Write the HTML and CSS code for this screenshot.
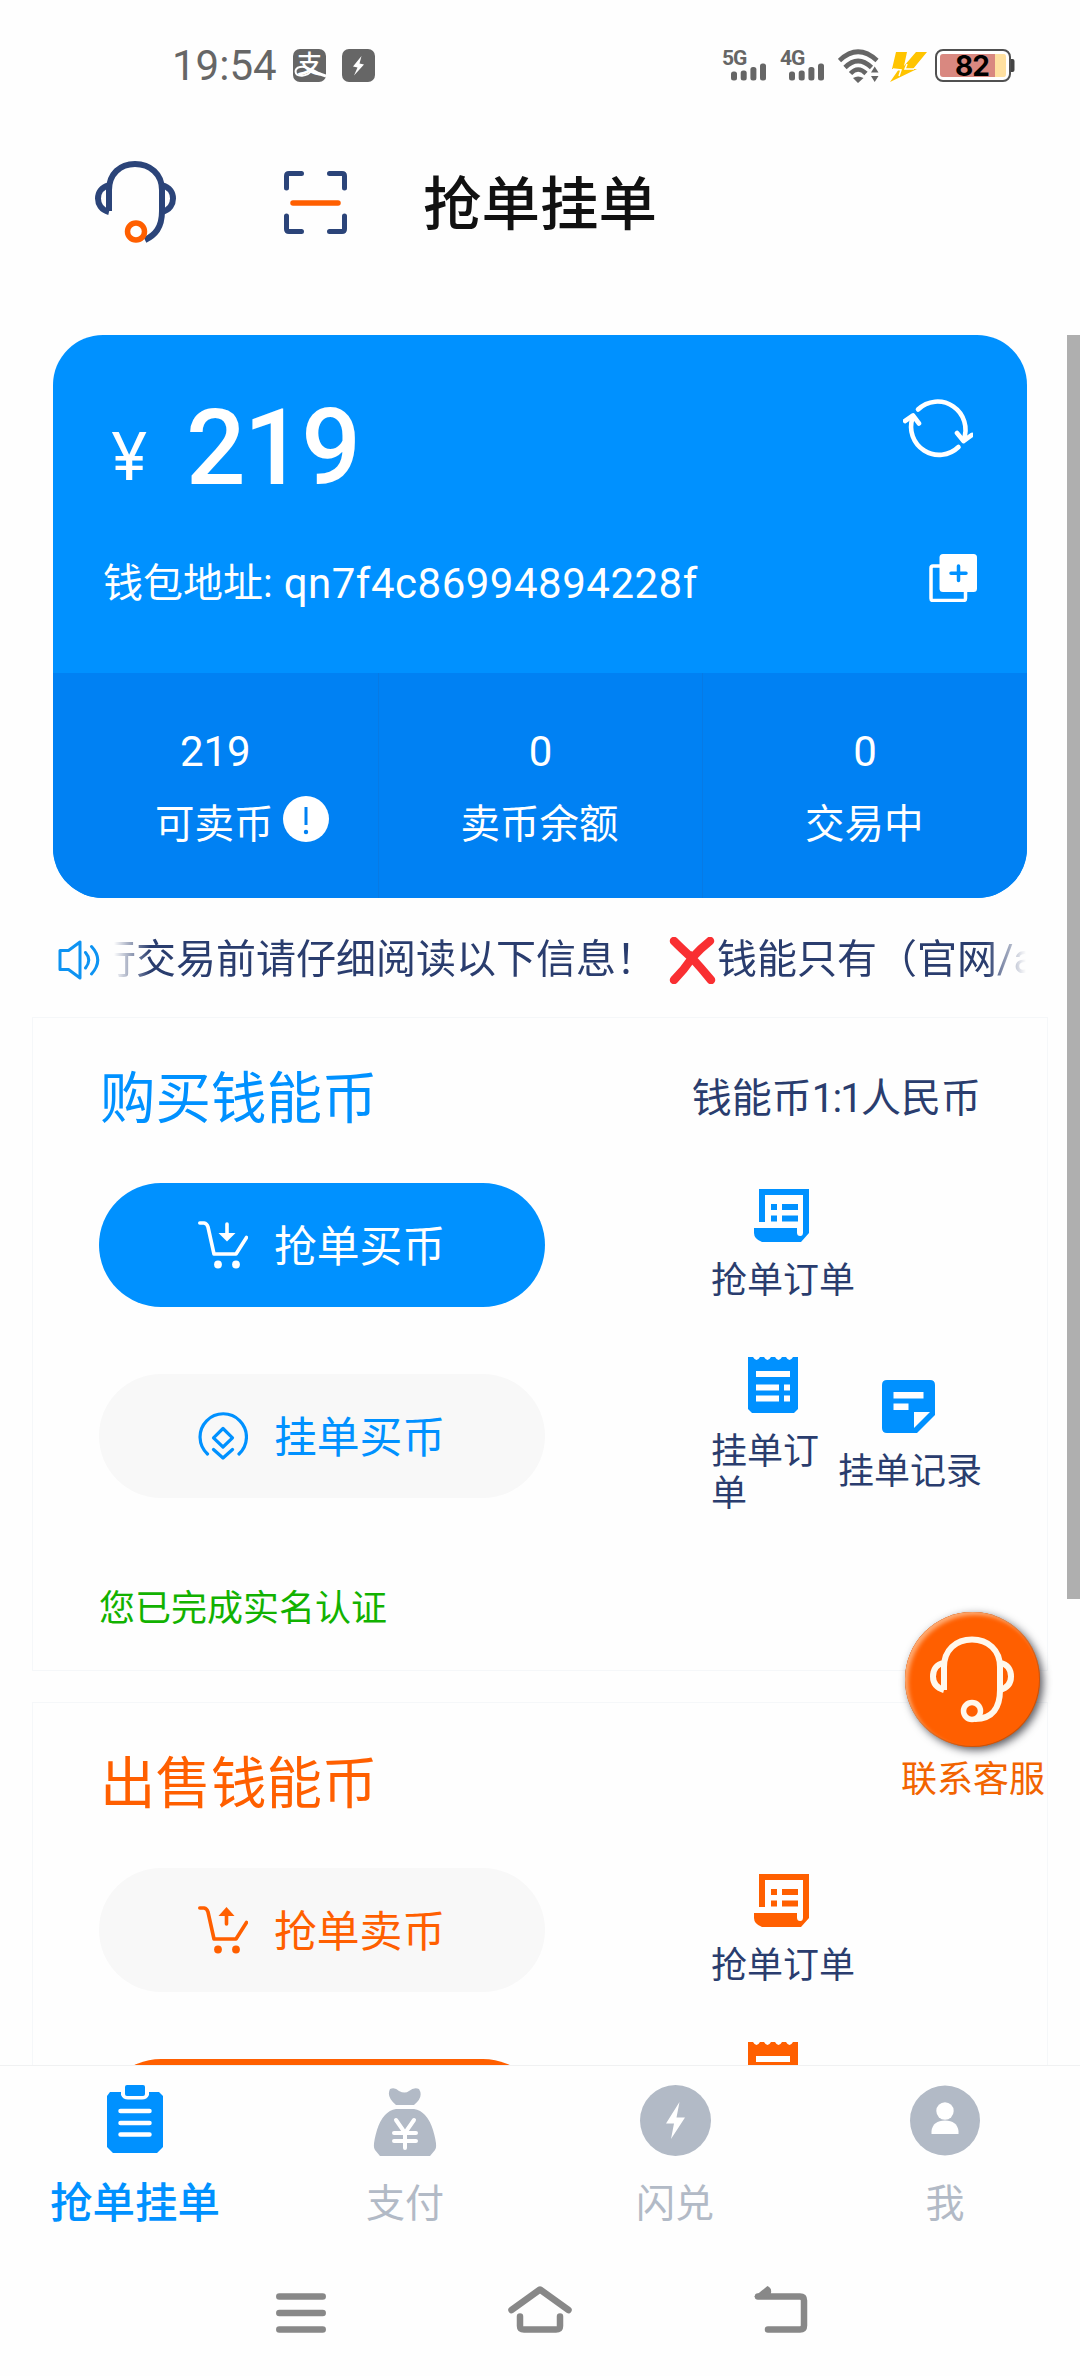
FILE: index.html
```html
<!DOCTYPE html>
<html lang="zh-CN">
<head>
<meta charset="utf-8">
<title>抢单挂单</title>
<link rel="stylesheet" href="styles.css">
</head>
<body>
<svg width="0" height="0" class="defs" aria-hidden="true">
  <symbol id="receipt" viewBox="0 0 55 53">
    <path fill="currentColor" d="M5 0H55V44L47 53H8Q0 50 0 44V39H43V43.500Q43 47 46.200 47Q49 47 49 43.500V6H11V33H5Z"/>
    <path fill="currentColor" d="M17 15h6v6h-6zM28 15h16v6H28zM17 26.500h6v6h-6zM28 26.500h16v6H28z"/>
  </symbol>
  <symbol id="bill" viewBox="0 0 50 56">
    <path fill="currentColor" fill-rule="evenodd" d="M0 0H5Q8.500 6 12 0H16Q19.500 6 23 0H27Q30.500 6 34 0H38Q41.500 6 45 0H50V52L46 56H4L0 52ZM8 14v6h34v-6zM8 27.500v6h23v-6zM36 27.500v6h6v-6zM8 38.500v6h23v-6zM36 38.500v6h6v-6z"/>
  </symbol>
  <symbol id="note" viewBox="0 0 53 53">
    <path fill="currentColor" fill-rule="evenodd" d="M5 0H48Q53 0 53 5V35L35 53H5Q0 53 0 48V5Q0 0 5 0ZM11.500 12v6.500h30V12zM11.500 23.500V30h15v-6.500zM32 32V48L48 32Z"/>
  </symbol>
  <symbol id="cart" viewBox="0 0 50 48">
    <path fill="none" stroke="currentColor" stroke-width="3.600" stroke-linecap="round" stroke-linejoin="round" d="M1.800 2H6Q9 2.500 10 6L16 33H38L48.500 16.500"/>
    <circle cx="20" cy="43.500" r="3.900" fill="currentColor"/><circle cx="38" cy="43.500" r="3.900" fill="currentColor"/>
  </symbol>
</svg>
<div class="phone">
  <header class="status">
    <div class="status-left">
      <span class="clock">19:54</span>
      <svg width="33" height="33" viewBox="0 0 33 33"><rect width="33" height="33" rx="7" fill="#666"/><text x="16.500" y="23.500" font-size="25" font-weight="500" text-anchor="middle" fill="#fff">支</text><path d="M18 20.500C10 15.500 2 18 2.600 23S14 28.500 19 21" fill="none" stroke="#fff" stroke-width="2"/><path d="M19 21Q25 25 33 27" fill="none" stroke="#fff" stroke-width="3"/></svg>
      <svg width="33" height="33" viewBox="0 0 33 33"><rect width="33" height="33" rx="7" fill="#666"/><path d="M19.500 7L11 17.500L15.500 18.500L12 26.500L22 15.500L17.500 14.500Z" fill="#fff"/></svg>
    </div>
    <div class="status-right">
      <svg class="signal" width="44" height="34" viewBox="0 0 44 34" fill="#666"><text class="net" x="0" y="16">5G</text><rect x="9" y="22.500" width="6" height="9" rx="2.500"/><rect x="18.700" y="21.500" width="6" height="10" rx="2.500"/><rect x="28.400" y="18" width="6" height="13.500" rx="2.500"/><rect x="38" y="14.500" width="6" height="17" rx="2.500"/></svg>
      <svg class="signal" width="44" height="34" viewBox="0 0 44 34" fill="#666"><text class="net" x="0" y="16">4G</text><rect x="9" y="22.500" width="6" height="9" rx="2.500"/><rect x="18.700" y="21.500" width="6" height="10" rx="2.500"/><rect x="28.400" y="18" width="6" height="13.500" rx="2.500"/><rect x="38" y="14.500" width="6" height="17" rx="2.500"/></svg>
      <svg class="wifi" width="41" height="34" viewBox="0 0 41 34"><g fill="none" stroke="#666" stroke-width="4.600"><path d="M1.500 11.500Q20 -6 39 11.500"/><path d="M7 18.500Q20 5.500 33.500 18.500"/><path d="M12.500 24.500Q20 16.500 28 24.500"/></g><path fill="#666" d="M15 29Q20 26 25.500 29L20 34ZM33 23.500L36.700 17.500L40.500 23.500ZM33 27L36.700 33L40.500 27Z"/></svg>
      <svg width="37" height="33" viewBox="0 0 37 33"><path fill="#ffc400" d="M6 3H17L14 17L26 3H37L23 20H27L0 33L9 20H2Z"/><path d="M3 20L11 21L9 27M17 15L15 20H24" fill="none" stroke="#fff" stroke-width="1.500"/></svg>
      <svg class="battery" width="80" height="33" viewBox="0 0 80 33"><rect x="1" y="1" width="74" height="31" rx="7" fill="#fff" stroke="#505050" stroke-width="2"/><path fill="#d98880" d="M8 5H60V28H8Q5 28 5 25V8Q5 5 8 5Z"/><path fill="#ffe0a0" d="M60 5H69Q71 5 71 8V25Q71 28 69 28H60Z"/><path d="M76 10h1.500q2 0 2 2v9q0 2-2 2H76z" fill="#444"/><text x="37" y="26.500" text-anchor="middle" class="pct">82</text></svg>
    </div>
  </header>

  <nav class="top">
    <svg width="81" height="84" viewBox="0 0 81 84" fill="none" stroke="#2b4479" stroke-width="6" stroke-linejoin="round"><path d="M14 51V30C14 14 25 4 40 4S67 14 67 30V51C67 68 60 75 50 80"/><path d="M14 25.500C6 27 3 33 3 38.500S6 50 14 52M67 25.500C75 27 78 33 78 38.500S75 50 67 52"/><circle cx="41" cy="71.500" r="8.500" fill="#fff" stroke="#ff5f00" stroke-width="5.500"/></svg>
    <svg width="63" height="63" viewBox="0 0 63 63" fill="none" stroke="#2b4479" stroke-width="5" stroke-linecap="round" stroke-linejoin="round"><path d="M2.500 17V5Q2.500 2.500 5 2.500H17.500M45.500 2.500H58Q60.500 2.500 60.500 5V17M60.500 45V58Q60.500 60.500 58 60.500H45.500M17.500 60.500H5Q2.500 60.500 2.500 58V45"/><path d="M9 32H54" stroke="#ff5f00" stroke-width="5.500"/></svg>
    <h1>抢单挂单</h1>
  </nav>

  <main>
    <section class="wallet">
      <div class="balance">
        <span class="yen">¥</span><span class="amount">219</span>
        <svg width="70" height="62" viewBox="0 0 70 62" fill="none" stroke="#fff" stroke-width="4.600" stroke-linecap="round" stroke-linejoin="round"><path d="M15 11.500A28 28 0 0 1 60.500 42"/><path d="M54 35L60.500 43L69 37"/><path d="M55.500 49A28 28 0 0 1 9.500 20"/><path d="M2 23L10 17.500L16 25.500"/></svg>
      </div>
      <div class="address">
        <span>钱包地址:</span><span class="code">qn7f4c86994894228f</span>
        <svg width="48" height="48" viewBox="0 0 48 48"><path d="M11 12H4Q2 12 2 14V44.500Q2 46.500 4 46.500H34.500Q36.500 46.500 36.500 44.500V37" fill="none" stroke="#fff" stroke-width="3.500"/><rect x="10.500" y="0" width="37.500" height="38" rx="3.500" fill="#fff"/><path d="M29.500 12V26.500M22 19.200H37" stroke="#0091ff" stroke-width="3.500" stroke-linecap="round"/></svg>
      </div>
      <div class="stats">
        <div class="stat"><b>219</b><span class="label">可卖币<i class="info"><svg width="46" height="46" viewBox="0 0 46 46"><circle cx="23" cy="23" r="23" fill="#fff"/><path d="M23 11V29" stroke="#0081f3" stroke-width="3"/><circle cx="23" cy="36" r="2.200" fill="#0081f3"/></svg></i></span></div>
        <div class="stat"><b>0</b><span class="label">卖币余额</span></div>
        <div class="stat"><b>0</b><span class="label">交易中</span></div>
      </div>
    </section>

    <div class="notice">
      <svg width="42" height="40" viewBox="0 0 42 40" fill="none" stroke="#0d93f2" stroke-width="3" stroke-linecap="round" stroke-linejoin="round"><path d="M2 10.500H10.500L22 2V38L10.500 29.500H2Z"/><path d="M27.500 12.500Q34 20 27.500 28M33.500 6.500Q46 20 33.500 34"/></svg>
      <div class="ticker"><span>行交易前请仔细阅读以下信息！</span><svg width="47" height="47" viewBox="0 0 47 47"><path d="M5 4Q15 14 23 21Q32 11 41 4M5 43Q15 33 23 21Q33 32 42 43" fill="none" stroke="#f92f32" stroke-width="8.500" stroke-linecap="round"/></svg><span>钱能只有（官网/app）</span></div>
    </div>

    <section class="panel buy">
      <div class="panel-head"><h2>购买钱能币</h2><span>钱能币<i class="ratio">1:1</i>人民币</span></div>
      <div class="panel-grid">
        <button class="pill solid"><svg width="50" height="48"><use href="#cart"/><path d="M29 3V13" stroke="#fff" stroke-width="3.600" stroke-linecap="round"/><path d="M20.500 12H37.500L29 20.500Z" fill="#fff"/></svg><span>抢单买币</span></button>
        <div class="actions"><a><svg width="55" height="53"><use href="#receipt"/></svg><span>抢单订单</span></a></div>
        <button class="pill"><svg width="50" height="48" viewBox="0 0 50 48" fill="none" stroke="currentColor" stroke-width="3.200" stroke-linecap="round" stroke-linejoin="round"><path d="M9.500 42A23.200 23.200 0 1 1 41 42"/><path d="M25 16.500L34.500 25.800L25 35L15.500 25.800Z"/><path d="M15.500 37.500L25 46L34.500 37.500"/></svg><span>挂单买币</span></button>
        <div class="actions"><a class="narrow"><svg width="50" height="56"><use href="#bill"/></svg><span>挂单订单</span></a><a><svg width="53" height="53"><use href="#note"/></svg><span>挂单记录</span></a></div>
      </div>
      <p class="verified">您已完成实名认证</p>
    </section>

    <section class="panel sell">
      <div class="panel-head"><h2>出售钱能币</h2></div>
      <div class="panel-grid">
        <button class="pill"><svg width="50" height="48"><use href="#cart"/><path d="M28.500 10V18" stroke="#ff5f00" stroke-width="3.600" stroke-linecap="round"/><path d="M20.500 10H36.500L28.500 1Z" fill="#ff5f00"/></svg><span>抢单卖币</span></button>
        <div class="actions"><a><svg width="55" height="53"><use href="#receipt"/></svg><span>抢单订单</span></a></div>
        <button class="pill solid"></button>
        <div class="actions"><a class="narrow"><svg width="50" height="56"><use href="#bill"/></svg><span></span></a><a class="second"><svg width="53" height="53"><use href="#note"/></svg><span></span></a></div>
      </div>
    </section>
  </main>

  <footer class="tabs">
    <a class="active"><svg width="58" height="71" viewBox="0 0 58 71"><path d="M4 7H15V10Q17 14.500 22 14.500H36Q41 14.500 43 10V7H53L57 11V62L51 68H7L1 62V11Z" fill="currentColor"/><rect x="19" y="0" width="20" height="11" rx="2" fill="currentColor"/><path d="M14.500 26H43.500M14.500 38H43.500M14.500 49.500H43.500" stroke="#fff" stroke-width="4.500" stroke-linecap="round"/></svg><span>抢单挂单</span></a>
    <a><svg width="64" height="71" viewBox="0 0 64 71"><path d="M17 4Q22 2 26 6Q32 9 36 6Q41 2 46 4Q51 12 41 20H23Q13 12 17 4ZM23 24H41Q54 26 60 45Q65 62 62 65L57 71H7L2 65Q-1 62 4 45Q10 26 23 24Z" fill="currentColor"/><path d="M23 35L32 48L41 35M32 48V63M21 48H43M21 56H43" fill="none" stroke="#fff" stroke-width="4" stroke-linecap="round"/></svg><span>支付</span></a>
    <a><svg width="71" height="71" viewBox="0 0 71 71"><circle cx="35.500" cy="35.500" r="35.500" fill="currentColor"/><path d="M39.500 17L26 38.500H34L31 54L45 32.500H36.500Z" fill="#fff"/></svg><span>闪兑</span></a>
    <a><svg width="70" height="71" viewBox="0 0 70 71"><circle cx="35" cy="35.500" r="35" fill="currentColor"/><circle cx="35" cy="26" r="8.700" fill="#fff"/><path d="M21.500 49V46Q23 35.500 35 35.500T48.500 46V49Z" fill="#fff"/></svg><span>我</span></a>
  </footer>
  <div class="system">
    <svg width="50" height="48" viewBox="0 0 50 48" stroke="#888" stroke-width="6.500" stroke-linecap="round"><path d="M3.300 10.500H46.700M3.300 27H46.700M3.300 43.500H46.700"/></svg>
    <svg width="64" height="48" viewBox="0 0 64 48" fill="none" stroke="#888" stroke-width="6.500" stroke-linecap="round" stroke-linejoin="round"><path d="M3.500 24L32 3.500L60.500 24"/><path d="M12 30.500V40Q12 43.500 16 43.500H48Q52 43.500 52 40V30.500"/></svg>
    <svg width="54" height="48" viewBox="0 0 54 48" fill="none" stroke="#888" stroke-width="6.500" stroke-linejoin="round" stroke-linecap="round"><path d="M14 43.500H46Q50 43.500 50 39.500V14.500Q50 10.500 46 10.500H4"/><path d="M0 11L13.500 0Q18 2 17 7L15 12Z" fill="#888" stroke="none"/></svg>
  </div>

  <div class="scrollbar"></div>
  <a class="support"><span class="disc"><svg width="84" height="87" viewBox="0 0 84 87" fill="none" stroke="#fff8ec" stroke-width="6" stroke-linejoin="round"><path d="M14 54V31C14 14 26 3.500 42 3.500S70 14 70 31V54C70 71 63 83 45 83"/><path d="M14 27C6 28 3 34 3 40.500S7 52 14 54M70 27C78 28 81 34 81 40.500S77 52 70 54"/><circle cx="42" cy="75" r="8.500" fill="#ff5f00" stroke-width="5.500"/></svg></span><span class="support-label">联系客服</span></a>
</div>
</body>
</html>
```
FILE: styles.css
```css
* { box-sizing: border-box; margin: 0; padding: 0; }
body { background: #fefefe; font-family: Roboto, "Noto Sans CJK SC", sans-serif; color: #2a3d6e; }
svg { display: block; flex: none; }
i { font-style: normal; }
.defs { position: absolute; }
.phone { position: relative; width: 1080px; height: 2376px; overflow: hidden; display: flex; flex-direction: column; }

.status { height: 131px; padding: 0 65px 0 172px; display: flex; justify-content: space-between; align-items: center; color: #666; }
.status-left, .status-right { display: flex; align-items: center; }
.status-left { gap: 16px; }
.clock { width: 105px; font-size: 42px; line-height: 50px; }
.status-right { gap: 14px; }
.signal { overflow: visible; }
.net { font: 700 21px Roboto, sans-serif; letter-spacing: -1px; }
.wifi { margin-right: -3px; }
.pct { font: 700 28px Inter, Roboto, sans-serif; fill: #000; letter-spacing: -1px; }
.battery { margin-left: -6px; }

.top { height: 142px; margin-bottom: 2px; padding: 0 95px; display: flex; align-items: center; }
.top h1 { margin: 5px 0 0 76px; color: #111; font-size: 58.500px; font-weight: 500; line-height: 80px; }
.top svg + svg { margin-left: 108px; }

main { height: 1790px; padding-top: 60px; overflow: hidden; flex: none; }
.wallet { margin: 0 53px; height: 563px; border-radius: 50px; overflow: hidden; background: #0091ff; color: #fff; }
.balance { height: 188px; padding: 54px 54px 0 58px; display: flex; align-items: flex-start; }
.yen { width: 75px; margin-top: 32px; font: 400 66px/70px Inter, sans-serif; }
.amount { font-size: 105px; line-height: 120px; font-weight: 500; letter-spacing: -2px; }
.balance svg { margin: 9px 0 0 auto; }
.address { height: 150px; padding: 33px 50px 0; display: flex; align-items: flex-start; font-size: 40px; line-height: 56px; }
.code { margin-left: 11px; font-size: 42px; letter-spacing: .5px; }
.address svg { margin: -2px 0 0 auto; }
.stats { height: 225px; display: grid; grid-template-columns: repeat(3, 1fr); background: #0081f3; }
.stat { padding-top: 54px; display: flex; flex-direction: column; align-items: center; }
.stat + .stat { border-left: 1px solid #077ae4; }
.stat b { font-size: 42px; font-weight: 400; line-height: 50px; }
.label { display: flex; margin: 20px 2px 0 0; font-size: 39.500px; line-height: 56px; }
.info { width: 0; padding-left: 9px; margin: -1px -9px 0 0; }

.notice { height: 119px; padding: 5px 54px 0 58px; display: flex; align-items: center; }
.ticker { flex: 1; min-width: 0; margin-left: 14px; overflow: hidden; display: flex; align-items: center; white-space: nowrap; font-size: 40px; line-height: 58px;
  -webkit-mask-image: linear-gradient(90deg, transparent, #000 36px, #000 calc(100% - 40px), transparent);
  mask-image: linear-gradient(90deg, transparent, #000 36px, #000 calc(100% - 40px), transparent); }
.ticker span { flex: none; }
.ticker span:first-child { margin-left: -18px; margin-right: 13px; }
.ticker span:last-child { margin-left: 1px; }

.panel { margin: 0 32px; border: 1px solid #f5f7f9; height: 654px; padding: 52px 65px 0 66px; }
.panel + .panel { margin-top: 31px; }
.panel-head { display: flex; justify-content: space-between; align-items: center; height: 56px; font-size: 40px; line-height: 56px; }
.panel-head span { margin: 1px 1px 0 0; }
.ratio { letter-spacing: -1.800px; }
h2 { margin: 3px 0 0 1px; font-size: 55.500px; font-weight: 400; line-height: 56px; }
.panel-grid { margin-top: 57px; display: grid; grid-template-columns: 446px 1fr; grid-template-rows: 124px 124px; gap: 67px 166px; align-items: center; }
.pill { height: 124px; border: 0; border-radius: 62px; background: #f8f8f8; padding-left: 99px; display: flex; align-items: center; gap: 26px; font: 400 42.800px/56px Roboto, "Noto Sans CJK SC", sans-serif; text-align: left; }
.pill span { margin-top: 4px; }
.buy h2, .buy .pill { color: #0091ff; }
.sell h2, .sell .pill { color: #ff5f00; }
.buy .pill.solid { background: #0091ff; color: #fff; }
.sell .pill.solid { background: #ff5f00; }
.actions { display: flex; align-items: center; gap: 3px; color: #2a3d6e; font-size: 36px; line-height: 42px; }
.actions a { display: flex; flex: none; flex-direction: column; align-items: center; gap: 18px; }
.actions a svg { margin-right: 3px; }
.actions a span { min-height: 42px; }
.actions a.narrow span { min-height: 84px; }
.narrow { width: 124px; }
.narrow span { width: 124px; }
.actions a.narrow svg { margin-right: 0; }
.second { width: 144px; }
.buy .actions svg { color: #0091ff; }
.sell .actions svg { color: #ff5f00; }
.verified { margin-top: 85px; color: #12b200; font-size: 36px; line-height: 52px; }

.tabs { height: 185px; border-top: 1px solid #f0f1f2; display: grid; grid-template-columns: repeat(4, 1fr); color: #b2bac6; background: #fefefe; }
.tabs a { display: flex; flex-direction: column; align-items: center; padding-top: 19px; font-size: 39px; line-height: 56px; }
.tabs span { margin-top: 20px; }
.tabs .active { color: #0091ff; font-size: 42.500px; font-weight: 500; }
.system { height: 126px; padding: 36px 272px 0 276px; display: flex; justify-content: space-between; align-items: flex-start; }

.scrollbar { position: absolute; left: 1067px; top: 335px; width: 13px; height: 1264px; background: #afafaf; }
.support { position: absolute; left: 901px; top: 1612px; width: 144px; display: flex; flex-direction: column; align-items: center; color: #f26400; font-size: 36px; line-height: 50px; }
.disc { width: 135px; height: 135px; margin-right: 2px; border-radius: 50%; background: #ff5f00; display: flex; align-items: center; justify-content: center; box-shadow: 3px 3px 8px rgba(20, 20, 30, .7), inset 3px 3px 4px #ffad75, inset 0 0 0 1px #c4500a; }
.support-label { margin-top: 8px; }
```
